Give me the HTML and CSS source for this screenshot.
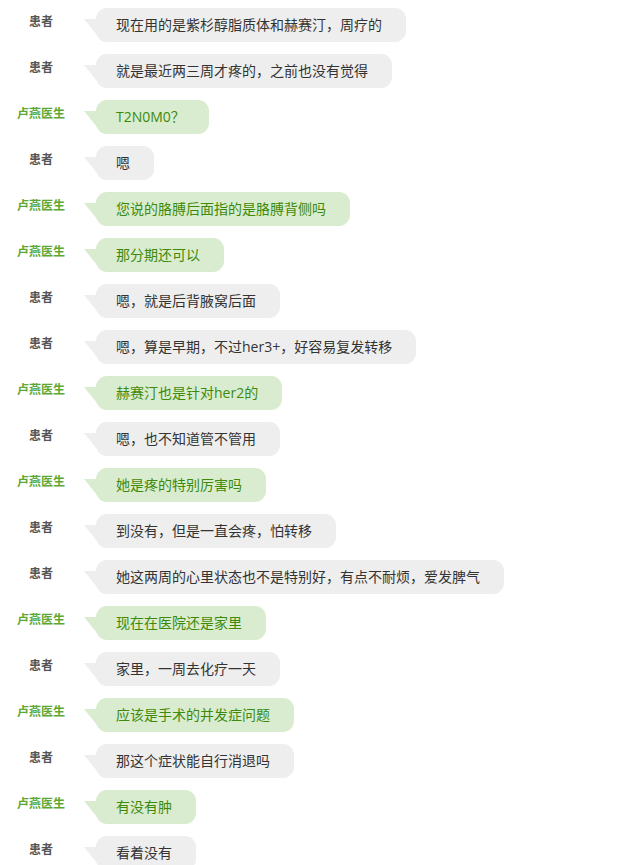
FILE: index.html
```html
<!DOCTYPE html>
<html lang="zh-CN">
<head>
  <meta charset="UTF-8" />
  <meta name="viewport" content="width=device-width, initial-scale=1.0" />
  <title>问诊记录</title>
  <link rel="stylesheet" href="styles.css">
</head>
<body>
  <div class="chat">
    <div class="msg"><div class="who">患者</div><div class="bubble">现在用的是紫杉醇脂质体和赫赛汀，周疗的</div></div>
    <div class="msg"><div class="who">患者</div><div class="bubble">就是最近两三周才疼的，之前也没有觉得</div></div>
    <div class="msg doc"><div class="who">卢燕医生</div><div class="bubble">T2N0M0？</div></div>
    <div class="msg"><div class="who">患者</div><div class="bubble">嗯</div></div>
    <div class="msg doc"><div class="who">卢燕医生</div><div class="bubble">您说的胳膊后面指的是胳膊背侧吗</div></div>
    <div class="msg doc"><div class="who">卢燕医生</div><div class="bubble">那分期还可以</div></div>
    <div class="msg"><div class="who">患者</div><div class="bubble">嗯，就是后背腋窝后面</div></div>
    <div class="msg"><div class="who">患者</div><div class="bubble">嗯，算是早期，不过her3+，好容易复发转移</div></div>
    <div class="msg doc"><div class="who">卢燕医生</div><div class="bubble">赫赛汀也是针对her2的</div></div>
    <div class="msg"><div class="who">患者</div><div class="bubble">嗯，也不知道管不管用</div></div>
    <div class="msg doc"><div class="who">卢燕医生</div><div class="bubble">她是疼的特别厉害吗</div></div>
    <div class="msg"><div class="who">患者</div><div class="bubble">到没有，但是一直会疼，怕转移</div></div>
    <div class="msg"><div class="who">患者</div><div class="bubble">她这两周的心里状态也不是特别好，有点不耐烦，爱发脾气</div></div>
    <div class="msg doc"><div class="who">卢燕医生</div><div class="bubble">现在在医院还是家里</div></div>
    <div class="msg"><div class="who">患者</div><div class="bubble">家里，一周去化疗一天</div></div>
    <div class="msg doc"><div class="who">卢燕医生</div><div class="bubble">应该是手术的并发症问题</div></div>
    <div class="msg"><div class="who">患者</div><div class="bubble">那这个症状能自行消退吗</div></div>
    <div class="msg doc"><div class="who">卢燕医生</div><div class="bubble">有没有肿</div></div>
    <div class="msg"><div class="who">患者</div><div class="bubble">看着没有</div></div>
  </div>
</body>
</html>
```

FILE: styles.css
```css
body {
  margin: 0;
  padding: 8px 0 0 0;
  background: #fff;
  font-family: "Open Sans", "Noto Sans CJK SC", sans-serif;
  color: #333;
}
.chat {
  display: flex;
  flex-direction: column;
  gap: 12px;
}
.msg {
  display: flex;
  align-items: flex-start;
}
.who {
  width: 82px;
  flex: none;
  padding-top: 6px;
  font-size: 12px;
  line-height: 16px;
  font-weight: bold;
  text-align: center;
  color: #555;
}
.bubble {
  position: relative;
  margin-left: 14px;
  padding: 0 24px 0 20px;
  height: 34px;
  line-height: 34px;
  font-size: 14px;
  background: #eee;
  border-radius: 11px;
  white-space: nowrap;
}
/* tail */
.bubble::before {
  content: "";
  position: absolute;
  left: -12px;
  top: 11px;
  width: 0;
  height: 0;
  border-top: 16px solid #eee;
  border-left: 13px solid transparent;
}
.doc .who { color: #5ea832; }
.doc .bubble {
  background: #d9ecd0;
  color: #3d8a0a;
}
.doc .bubble::before { border-top-color: #d9ecd0; }
```
